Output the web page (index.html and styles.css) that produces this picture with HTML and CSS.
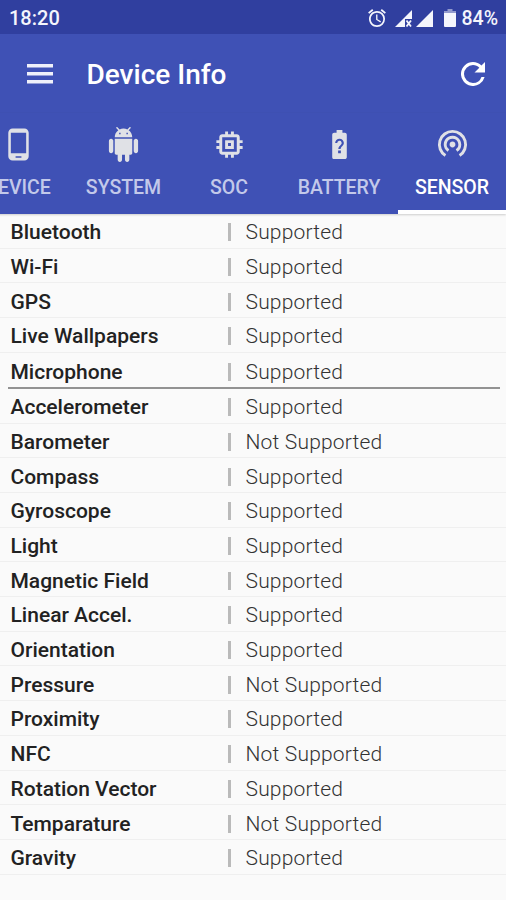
FILE: index.html
```html
<!DOCTYPE html>
<html lang="en">
<head>
<meta charset="utf-8">
<title>Device Info</title>
<link rel="stylesheet" href="styles.css">
</head>
<body>
<div class="status">
  <span class="clock">18:20</span>
  <svg class="alarm" viewBox="2 1.8 20 20.2"><path d="M22 5.72l-4.6-3.86-1.29 1.53 4.6 3.86L22 5.72zM7.88 3.39L6.6 1.86 2 5.71l1.29 1.53 4.59-3.85zM12.5 8H11v6l4.75 2.85.75-1.23-4-2.37V8zM12 4c-4.97 0-9 4.03-9 9s4.02 9 9 9a9 9 0 0 0 0-18zm0 16c-3.87 0-7-3.13-7-7s3.13-7 7-7 7 3.13 7 7-3.13 7-7 7z"/></svg>
  <svg class="signal sim1" viewBox="0 0 17 17"><path d="M0 17L17 0v9h-7v8z"/><path class="cross" d="M11.5 10.5l4.5 6m0-6l-4.500 6"/></svg>
  <svg class="signal" viewBox="0 0 17 17"><path d="M0 17L17 0v17z"/></svg>
  <svg class="charge" viewBox="0 0 12 18"><path class="cap" d="M3.500 0h5v2H12v3H0V2h3.500z"/><path d="M0 4h12v13q0 1-1 1H1q-1 0-1-1z"/></svg>
  <span class="percent">84%</span>
</div>
<header class="bar">
  <svg class="menu" viewBox="0 0 26 20"><path d="M0 0h26v3.500H0zM0 8h26v3.500H0zM0 16h26v3.500H0z"/></svg>
  <h1>Device Info</h1>
  <svg class="refresh" viewBox="4 4 16 16"><path d="M17.65 6.35A7.958 7.958 0 0 0 12 4a8 8 0 1 0 7.730 10h-2.080A5.990 5.990 0 0 1 12 18a6 6 0 1 1 0-12c1.660 0 3.140.69 4.220 1.780L13 11h7V4l-2.350 2.350z"/></svg>
</header>
<nav class="tabs">
  <div class="tab device"><svg viewBox="0 0 24 24"><path d="M16 1H8C6.340 1 5 2.340 5 4v16c0 1.660 1.340 3 3 3h8c1.660 0 3-1.340 3-3V4c0-1.660-1.340-3-3-3zm-2 20h-4v-1h4v1zm3.250-3H6.750V4h10.500v14z"/></svg><span>DEVICE</span></div>
  <div class="tab system"><svg viewBox="0 0 24 24"><path d="M6 18c0 .55.45 1 1 1h1v3.500c0 .83.67 1.500 1.500 1.500s1.500-.67 1.500-1.500V19h2v3.500c0 .83.67 1.500 1.500 1.500s1.500-.67 1.500-1.500V19h1c.55 0 1-.45 1-1V8H6v10zM3.500 8C2.670 8 2 8.670 2 9.500v7c0 .83.67 1.500 1.500 1.500S5 17.330 5 16.500v-7C5 8.670 4.330 8 3.500 8zm17 0c-.83 0-1.500.67-1.500 1.500v7c0 .83.67 1.500 1.500 1.500s1.500-.67 1.500-1.500v-7c0-.83-.67-1.500-1.500-1.500zm-4.970-5.840l1.300-1.300c.2-.2.2-.51 0-.71-.2-.2-.51-.2-.71 0l-1.480 1.480A5.840 5.840 0 0 0 12 1c-.96 0-1.860.23-2.660.63L7.850.15c-.2-.2-.51-.2-.71 0-.2.2-.2.51 0 .71l1.310 1.310A5.983 5.983 0 0 0 6 7h12c0-1.990-.97-3.750-2.470-4.840zM10 5H9V4h1v1zm5 0h-1V4h1v1z"/></svg><span>SYSTEM</span></div>
  <div class="tab soc"><svg viewBox="0 0 24 24"><path d="M15 9H9v6h6V9zm-2 4h-2v-2h2v2zm8-2V9h-2V7c0-1.100-.9-2-2-2h-2V3h-2v2h-2V3H9v2H7c-1.100 0-2 .9-2 2v2H3v2h2v2H3v2h2v2c0 1.100.9 2 2 2h2v2h2v-2h2v2h2v-2h2c1.100 0 2-.9 2-2v-2h2v-2h-2v-2h2zm-4 6H7V7h10v10z"/></svg><span>SOC</span></div>
  <div class="tab battery"><svg viewBox="0 0 24 24"><path d="M15.670 4H14V2h-4v2H8.330C7.600 4 7 4.600 7 5.330v15.330C7 21.400 7.600 22 8.330 22h7.330c.74 0 1.340-.6 1.340-1.330V5.330C17 4.600 16.400 4 15.670 4zm-2.720 13.950h-1.900v-1.900h1.900v1.900zm1.350-5.260s-.38.42-.67.71c-.48.48-.83 1.150-.83 1.600h-1.600c0-.83.46-1.520.93-2l.93-.94A1.498 1.498 0 0 0 12 9.500c-.83 0-1.500.67-1.500 1.500H9c0-1.660 1.340-3 3-3s3 1.340 3 3c0 .66-.27 1.260-.7 1.690z"/></svg><span>BATTERY</span></div>
  <div class="tab sensor"><svg viewBox="0 0 24 24"><path d="M12 10c-1.100 0-2 .9-2 2s.9 2 2 2 2-.9 2-2-.9-2-2-2zm6 2a6 6 0 1 0-9.270 5.020l1.050-1.710A3.996 3.996 0 0 1 12 8a3.996 3.996 0 0 1 2.220 7.310l1.050 1.710A5.990 5.990 0 0 0 18 12zM12 2a10 10 0 0 0-5.370 18.430l1.050-1.710A7.990 7.990 0 0 1 12 4a7.990 7.990 0 0 1 4.320 14.720l1.050 1.710A10 10 0 0 0 12 2z"/></svg><span>SENSOR</span></div>
</nav>
<main>
  <dl class="group">
    <div class="row"><dt>Bluetooth</dt><dd>Supported</dd></div>
    <div class="row"><dt>Wi-Fi</dt><dd>Supported</dd></div>
    <div class="row"><dt>GPS</dt><dd>Supported</dd></div>
    <div class="row"><dt>Live Wallpapers</dt><dd>Supported</dd></div>
    <div class="row"><dt>Microphone</dt><dd>Supported</dd></div>
  </dl>
  <hr>
  <dl class="group">
    <div class="row"><dt>Accelerometer</dt><dd>Supported</dd></div>
    <div class="row"><dt>Barometer</dt><dd>Not Supported</dd></div>
    <div class="row"><dt>Compass</dt><dd>Supported</dd></div>
    <div class="row"><dt>Gyroscope</dt><dd>Supported</dd></div>
    <div class="row"><dt>Light</dt><dd>Supported</dd></div>
    <div class="row"><dt>Magnetic Field</dt><dd>Supported</dd></div>
    <div class="row"><dt>Linear Accel.</dt><dd>Supported</dd></div>
    <div class="row"><dt>Orientation</dt><dd>Supported</dd></div>
    <div class="row"><dt>Pressure</dt><dd>Not Supported</dd></div>
    <div class="row"><dt>Proximity</dt><dd>Supported</dd></div>
    <div class="row"><dt>NFC</dt><dd>Not Supported</dd></div>
    <div class="row"><dt>Rotation Vector</dt><dd>Supported</dd></div>
    <div class="row"><dt>Temparature</dt><dd>Not Supported</dd></div>
    <div class="row"><dt>Gravity</dt><dd>Supported</dd></div>
  </dl>
</main>
</body>
</html>
```
FILE: styles.css
```css
* { box-sizing: border-box; }
body {
  margin: 0;
  height: 900px;
  overflow: hidden;
  background: #fafafa;
  font-family: Roboto, "Liberation Sans", sans-serif;
}
svg { display: block; flex: none; fill: currentColor; }

.status {
  display: flex;
  align-items: center;
  height: 34px;
  padding: 2px 8px 0 9px;
  background: #303f9f;
  color: #f4f5fc;
  font-size: 19.5px;
  font-weight: 500;
}
.clock { flex: 1; font-size: 20px; }
.alarm { width: 18px; height: 18px; margin-right: 9px; }
.signal { width: 17px; height: 17px; }
.sim1 { margin-right: 4px; }
.cross { fill: none; stroke: currentColor; stroke-width: 1.8; }
.charge { width: 12px; height: 18px; margin: 0 5px 0 11px; }
.cap { opacity: .5; }

.bar {
  display: flex;
  align-items: center;
  height: 79px;
  padding: 0 21px 0 27px;
  background: #3f51b5;
  color: #fff;
}
.menu { width: 26px; height: 20px; margin-right: 33.5px; color: #eff0fa; }
.bar h1 { flex: 1; margin: 0; padding-top: 2px; font-size: 28px; font-weight: 500; }
.refresh { width: 24px; height: 24px; }

.tabs {
  display: flex;
  height: 101px;
  margin-left: -33px;
  background: #3f51b5;
  box-shadow: -33px 0 #3f51b5, 0 1px 2px rgba(0, 0, 0, .18);
  color: #c3c9ea;
  font-size: 19.5px;
  font-weight: 500;
}
.tab {
  flex: none;
  display: flex;
  flex-direction: column;
  align-items: center;
  width: 102px;
  padding-top: 14px;
}
.tab svg { width: 35px; height: 35px; color: #e0e1e6; }
.tab span { margin-top: 15px; line-height: 22px; }
.system { width: 109px; }
.soc { width: 102px; }
.battery { width: 118px; }
.sensor { width: 108px; color: #fff; border-bottom: 4px solid #fff; }

.group { margin: 0; }
.row {
  display: flex;
  align-items: center;
  height: 34.7px;
  padding: 3px 0 0 10.5px;
  border-bottom: 1px solid #efefef;
  font-size: 21px;
  line-height: 24px;
}
dt { width: 217px; color: #222; font-weight: 500; }
dd {
  display: flex;
  align-items: center;
  margin: 0;
  color: #333;
  font-weight: 300;
  letter-spacing: .18px;
}
dd::before {
  content: "";
  width: 3px;
  height: 18px;
  margin-right: 15px;
  background: #bababa;
}
.group:first-child .row:last-child { border-bottom: 0; }
hr { height: 1.500px; margin: 0 6px 0 8px; border: 0; background: #929292; }
```
